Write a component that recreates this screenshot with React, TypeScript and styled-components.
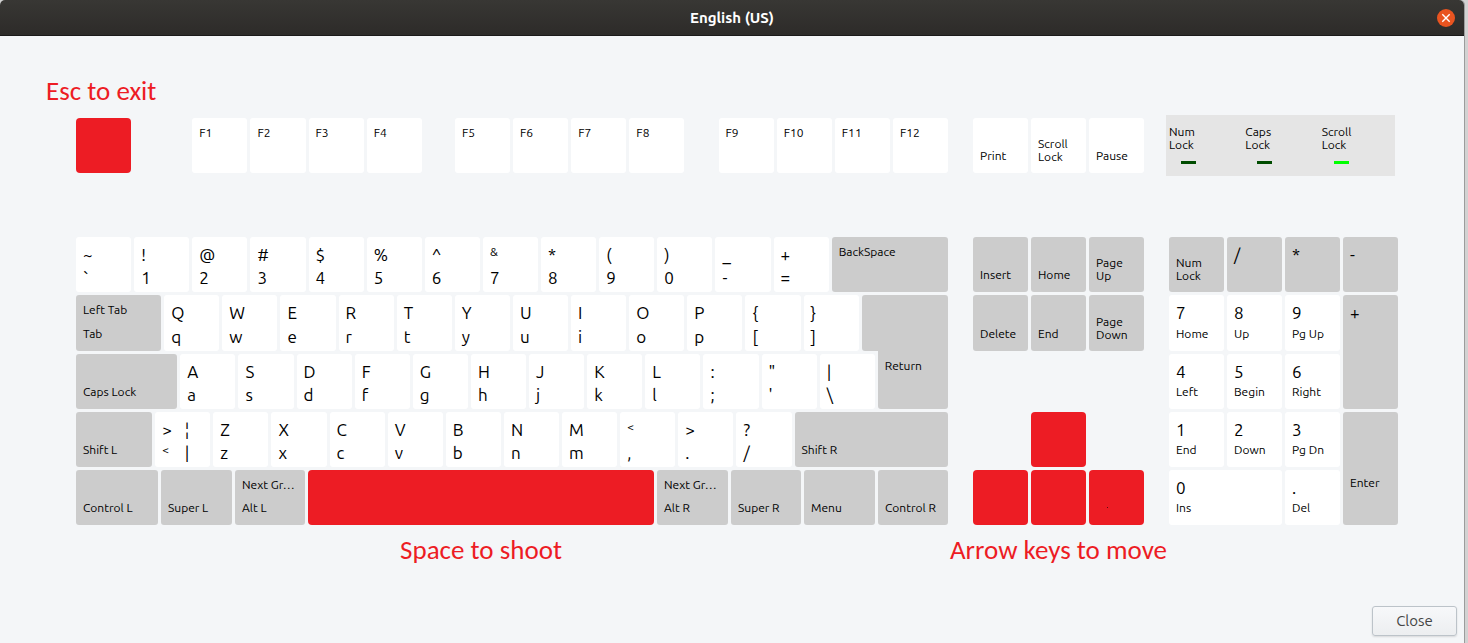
import React from 'react';
import styled, { createGlobalStyle, css } from 'styled-components';

const GlobalStyle = createGlobalStyle`
  * { box-sizing: border-box; }
  body {
    margin: 0;
    background: #d2d2d2;
    font-family: Ubuntu, 'Noto Sans', 'Open Sans', sans-serif;
    color: #000;
  }
`;

const Window = styled.div`
  display: flex;
  flex-direction: column;
  min-height: 100vh;
  margin-right: 4px;
  background: #f4f6f8;
  border-radius: 5px 5px 0 0;
  box-shadow: 1px 0 0 #9c9c9c;
`;

const TitleBar = styled.header`
  display: grid;
  grid-template-columns: 1fr auto 1fr;
  align-items: center;
  height: 36px;
  padding: 0 9px;
  border-radius: 5px 5px 0 0;
  border-bottom: 1px solid #1b1a1a;
  background: linear-gradient(#383734, #2d2b29);
`;

const Title = styled.h1`
  grid-column: 2;
  margin: 0;
  font-size: 15px;
  line-height: 20px;
  font-weight: 700;
  color: #fff;
`;

const CloseIcon = styled.button`
  justify-self: end;
  display: flex;
  width: 18px;
  height: 18px;
  padding: 0;
  border: 0;
  border-radius: 50%;
  background: #e95420;
`;

const Content = styled.main`
  flex: 1;
  display: flex;
  flex-direction: column;
  padding-top: 40px;
`;

const Caption = styled.p`
  margin: 0;
  font-family: Carlito, Lato, sans-serif;
  font-size: 27px;
  line-height: 30px;
  text-align: center;
  white-space: nowrap;
  color: #ed1c24;
`;

const TopCaption = styled(Caption)`
  padding: 0 46px 9px;
  text-align: left;
`;

const Board = styled.div`
  display: grid;
  grid-template-columns: 872fr 171fr 229fr;
  column-gap: 25px;
  align-items: center;
  padding: 0 66px 0 76px;
`;

const KeyBoard = styled(Board)`
  margin-top: 61px;
`;

const CaptionBoard = styled(Board)`
  margin-top: 10px;
`;

const CaptionCell = styled.div`
  display: flex;
  justify-content: center;
  min-width: 0;
`;

const rows = css`
  display: grid;
  grid-template-rows: 55px 56px 55px 55px 55px;
  gap: 3px;
`;

const MainBlock = styled.section`
  ${rows}
`;

const PadBlock = styled.section<{ $columns: number }>`
  ${rows}
  grid-template-columns: repeat(${p => p.$columns}, 1fr);
`;

const Row = styled.div<{ $height?: number }>`
  display: flex;
  gap: 3px;
  min-width: 0;
  height: ${p => (p.$height ? `${p.$height}px` : 'auto')};
`;

const Span = styled.div<{ $w: number }>`
  flex: ${p => p.$w} 1 ${p => p.$w}px;
  min-width: 0;
`;

const tones = { white: '#fff', grey: '#ccc', red: '#ed1c24' };
type Tone = keyof typeof tones;

const Cap = styled.button<{ $w: number; $tone: Tone; $area?: string }>`
  position: relative;
  flex: ${p => p.$w} 1 ${p => p.$w}px;
  min-width: 0;
  display: flex;
  align-items: stretch;
  gap: 13px;
  padding: 0 7px;
  border: 0;
  border-radius: ${p => (p.$tone === 'red' ? 4 : 3)}px;
  background: ${p => tones[p.$tone]};
  color: #000;
  font-family: inherit;
  text-align: left;
  ${p => p.$area && css`grid-area: ${p.$area};`}
`;

const ReturnTop = styled(Span)`
  border-radius: 3px 3px 0 3px;
  background: ${tones.grey};
`;

const ReturnCap = styled(Cap)`
  margin-top: -3px;
  border-radius: 0 0 3px 3px;
`;

const Legends = styled.span<{ $low?: boolean }>`
  display: flex;
  flex-direction: column;
  justify-content: space-between;
  padding-top: ${p => (p.$low ? '56px' : '0')};
`;

const Legend = styled.span<{ $large: boolean; $lower?: boolean; $wrapped?: boolean }>`
  font-size: ${p => (p.$large ? 17 : 12)}px;
  line-height: ${p => (p.$large ? 22 : 13)}px;
  margin-top: ${p => (p.$lower ? 'auto' : p.$large ? '7px' : '8px')};
  margin-bottom: ${p => (!p.$lower ? 0 : p.$large ? 3 : p.$wrapped ? 10 : 11)}px;
  white-space: pre;
`;

const Speck = styled.i`
  position: absolute;
  left: 18px;
  top: 37px;
  width: 1px;
  height: 1px;
  background: #5a0a0e;
`;

const Indicators = styled.section`
  display: grid;
  grid-template-columns: repeat(3, 1fr);
  height: 61px;
  margin: 0 3px 0 -3px;
  padding-top: 10px;
  background: #e5e5e5;
`;

const Indicator = styled.div`
  padding-left: 3px;
  font-size: 12px;
  line-height: 13px;
  white-space: pre-line;
`;

const Led = styled.div<{ $on?: boolean }>`
  width: 15px;
  height: 3px;
  margin: 10px 0 0 12px;
  background: ${p => (p.$on ? '#00ff00' : '#004c00')};
`;

const Footer = styled.footer`
  display: flex;
  justify-content: flex-end;
  margin-top: auto;
  padding: 7px;
`;

const CloseButton = styled.button`
  width: 85px;
  height: 30px;
  padding: 0;
  border: 1px solid #bcc3c9;
  border-radius: 3px;
  background: linear-gradient(#f7f8fa, #eceef0);
  box-shadow: 0 1px 2px rgba(0, 0, 0, 0.12);
  font-family: inherit;
  font-size: 15px;
  line-height: 20px;
  color: #454545;
`;

type KeyProps = {
  up?: string;
  down?: string;
  w?: number;
  tone?: Tone;
  area?: string;
  label?: string;
  small?: boolean;
  low?: boolean;
  alt?: [string, string];
  children?: React.ReactNode;
};

const isLarge = (text: string) => text.length === 1 && text !== '&';

function Key({ up, down, w = 55, tone = 'white', area, label, small, low, alt, children }: KeyProps) {
  return (
    <Cap type="button" $w={w} $tone={tone} $area={area} aria-label={label}>
      <Legends $low={low}>
        {up && <Legend $large={!small && isLarge(up)}>{up}</Legend>}
        {down && (
          <Legend $lower $large={isLarge(down) && !alt} $wrapped={down.includes('\n')}>
            {down}
          </Legend>
        )}
      </Legends>
      {alt && (
        <Legends>
          <Legend $large>{alt[0]}</Legend>
          <Legend $large $lower>{alt[1]}</Legend>
        </Legends>
      )}
      {children}
    </Cap>
  );
}

const pairs = (upper: string, lower: string) => upper.split('').map((u, i) => [u, lower[i]]);

const digits = pairs('~!@#$%^&*()_+', '`1234567890-=');
const topLetters = pairs('QWERTYUIOP{}', 'qwertyuiop[]');
const homeLetters = pairs('ASDFGHJKL:"|', "asdfghjkl;'\\");
const lowLetters = pairs('ZXCVBNM<>?', 'zxcvbnm,./');

const keysOf = (list: string[][]) =>
  list.map(([u, d]) => <Key key={d} up={u} down={d} small={u === '<'} />);

const fKeys = (from: number) =>
  [0, 1, 2, 3].map(i => <Key key={i} up={`F${from + i}`} />);

const numpad = [
  ['7', 'Home'], ['8', 'Up'], ['9', 'Pg Up'],
  ['4', 'Left'], ['5', 'Begin'], ['6', 'Right'],
  ['1', 'End'], ['2', 'Down'], ['3', 'Pg Dn'],
];

export default function App() {
  return (
    <>
      <GlobalStyle />
      <Window>
        <TitleBar>
          <Title>English (US)</Title>
          <CloseIcon type="button" aria-label="Close window">
            <svg width="18" height="18" viewBox="0 0 18 18" aria-hidden="true">
              <path d="M5.3 5.3l7.4 7.4M12.7 5.3l-7.4 7.4" stroke="#fff" strokeWidth="1.4" fill="none" />
            </svg>
          </CloseIcon>
        </TitleBar>
        <Content>
          <TopCaption>Esc to exit</TopCaption>
          <Board>
            <Row $height={55}>
              <Key tone="red" label="Escape" />
              <Span $w={55} />
              {fKeys(1)}
              <Span $w={27} />
              {fKeys(5)}
              <Span $w={28} />
              {fKeys(9)}
            </Row>
            <Row $height={55}>
              <Key down="Print" />
              <Key down={'Scroll\nLock'} />
              <Key down="Pause" />
            </Row>
            <Indicators>
              <Indicator>{'Num\nLock'}<Led /></Indicator>
              <Indicator>{'Caps\nLock'}<Led /></Indicator>
              <Indicator>{'Scroll\nLock'}<Led $on /></Indicator>
            </Indicators>
          </Board>

          <KeyBoard>
            <MainBlock>
              <Row>
                {keysOf(digits)}
                <Key w={116} tone="grey" up="BackSpace" />
              </Row>
              <Row>
                <Key w={85} tone="grey" up="Left Tab" down="Tab" />
                {keysOf(topLetters)}
                <ReturnTop $w={86} aria-hidden="true" />
              </Row>
              <Row>
                <Key w={101} tone="grey" down="Caps Lock" />
                {keysOf(homeLetters)}
                <ReturnCap type="button" $w={70} $tone="grey">
                  <Legends><Legend $large={false}>Return</Legend></Legends>
                </ReturnCap>
              </Row>
              <Row>
                <Key w={76} tone="grey" down="Shift L" />
                <Key up=">" down="<" alt={['¦', '|']} />
                {keysOf(lowLetters)}
                <Key w={153} tone="grey" down="Shift R" />
              </Row>
              <Row>
                <Key w={82} tone="grey" down="Control L" />
                <Key w={71} tone="grey" down="Super L" />
                <Key w={70} tone="grey" up="Next Gr…" down="Alt L" />
                <Key w={346} tone="red" label="Space" />
                <Key w={71} tone="grey" up="Next Gr…" down="Alt R" />
                <Key w={70} tone="grey" down="Super R" />
                <Key w={71} tone="grey" down="Menu" />
                <Key w={70} tone="grey" down="Control R" />
              </Row>
            </MainBlock>

            <PadBlock $columns={3}>
              <Key tone="grey" down="Insert" />
              <Key tone="grey" down="Home" />
              <Key tone="grey" down={'Page\nUp'} />
              <Key tone="grey" down="Delete" />
              <Key tone="grey" down="End" />
              <Key tone="grey" down={'Page\nDown'} />
              <Key tone="red" area="4 / 2" label="Up arrow" />
              <Key tone="red" area="5 / 1" label="Left arrow" />
              <Key tone="red" area="5 / 2" label="Down arrow" />
              <Key tone="red" area="5 / 3" label="Right arrow"><Speck /></Key>
            </PadBlock>

            <PadBlock $columns={4}>
              <Key tone="grey" down={'Num\nLock'} />
              <Key tone="grey" up="/" />
              <Key tone="grey" up="*" />
              <Key tone="grey" up="-" />
              {numpad.map(([u, d], i) => (
                <Key key={u} up={u} down={d} area={`${2 + Math.floor(i / 3)} / ${1 + (i % 3)}`} />
              ))}
              <Key tone="grey" up="+" area="2 / 4 / 4 / 5" />
              <Key up="0" down="Ins" area="5 / 1 / 6 / 3" />
              <Key up="." down="Del" area="5 / 3" />
              <Key tone="grey" up="Enter" low area="4 / 4 / 6 / 5" />
            </PadBlock>
          </KeyBoard>

          <CaptionBoard>
            <Row>
              <Span $w={229} />
              <Span $w={346}>
                <Caption>Space to shoot</Caption>
              </Span>
              <Span $w={291} />
            </Row>
            <CaptionCell>
              <Caption>Arrow keys to move</Caption>
            </CaptionCell>
          </CaptionBoard>
          <Footer>
            <CloseButton type="button">Close</CloseButton>
          </Footer>
        </Content>
      </Window>
    </>
  );
}
